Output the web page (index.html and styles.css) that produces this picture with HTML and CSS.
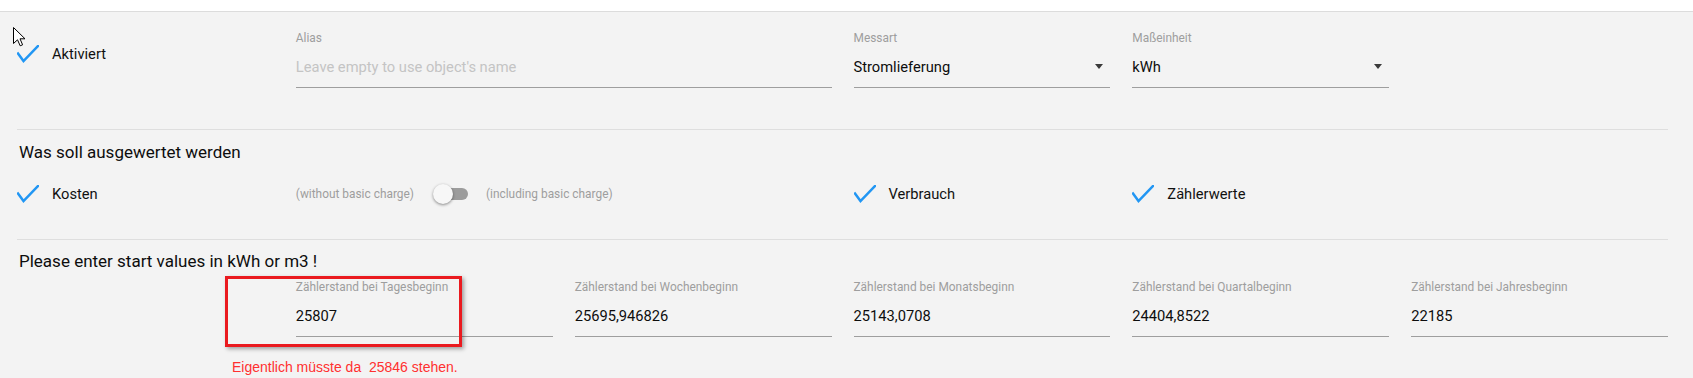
FILE: index.html
```html
<!DOCTYPE html>
<html lang="de">
<head>
<meta charset="utf-8">
<title>Einstellungen</title>
<link rel="stylesheet" href="styles.css">
</head>
<body>
<div class="topbar"></div>
<main class="page">
  <section class="sec sec1 grid">
    <div class="check-item check-top">
      <svg class="tick" viewBox="0 0 22 18" width="22" height="18"><polyline points="1,8.5 6.5,16 21,1" /></svg>
      <span>Aktiviert</span>
    </div>
    <div class="field span2">
      <div class="field-label">Alias</div>
      <div class="field-input placeholder">Leave empty to use object's name</div>
    </div>
    <div class="field">
      <div class="field-label">Messart</div>
      <div class="field-input select"><span>Stromlieferung</span><i class="caret"></i></div>
    </div>
    <div class="field">
      <div class="field-label">Maßeinheit</div>
      <div class="field-input select"><span>kWh</span><i class="caret"></i></div>
    </div>
  </section>

  <section class="sec sec2">
    <h3 class="heading">Was soll ausgewertet werden</h3>
    <div class="grid">
      <div class="check-item">
        <svg class="tick" viewBox="0 0 22 18" width="22" height="18"><polyline points="1,8.5 6.5,16 21,1" /></svg>
        <span>Kosten</span>
      </div>
      <div class="switch span2">
        <span class="switch-text">(without basic charge)</span>
        <span class="lever"><span class="knob"></span></span>
        <span class="switch-text">(including basic charge)</span>
      </div>
      <div class="check-item">
        <svg class="tick" viewBox="0 0 22 18" width="22" height="18"><polyline points="1,8.5 6.5,16 21,1" /></svg>
        <span>Verbrauch</span>
      </div>
      <div class="check-item">
        <svg class="tick" viewBox="0 0 22 18" width="22" height="18"><polyline points="1,8.5 6.5,16 21,1" /></svg>
        <span>Zählerwerte</span>
      </div>
    </div>
  </section>

  <section class="sec sec3">
    <h3 class="heading">Please enter start values in kWh or m3 !</h3>
    <div class="grid fields-row">
      <div class="field col2">
        <div class="highlight"></div>
        <div class="field-label">Zählerstand bei Tagesbeginn</div>
        <div class="field-input">25807</div>
      </div>
      <div class="field">
        <div class="field-label">Zählerstand bei Wochenbeginn</div>
        <div class="field-input">25695,946826</div>
      </div>
      <div class="field">
        <div class="field-label">Zählerstand bei Monatsbeginn</div>
        <div class="field-input">25143,0708</div>
      </div>
      <div class="field">
        <div class="field-label">Zählerstand bei Quartalbeginn</div>
        <div class="field-input">24404,8522</div>
      </div>
      <div class="field">
        <div class="field-label">Zählerstand bei Jahresbeginn</div>
        <div class="field-input">22185</div>
      </div>
    </div>
    <p class="note">Eigentlich müsste da&nbsp; 25846 stehen.</p>
  </section>
</main>
<svg class="cursor" viewBox="0 0 13 20" width="13" height="20"><path d="M0.5 0.5 L0.5 16.5 L4.5 12.8 L7.2 18.8 L9.6 17.8 L7 11.8 L12 11.8 Z" /></svg>
</body>
</html>
```

FILE: styles.css
```css
* { box-sizing: border-box; }

html, body {
  margin: 0;
  padding: 0;
  height: 100%;
  overflow: hidden;
}

body {
  background: #f3f3f3;
  font-family: Roboto, "Noto Sans", Arial, sans-serif;
  color: #111111;
  position: relative;
}

.topbar {
  height: 12px;
  background: #ffffff;
  border-bottom: 1px solid #dcdcdc;
}

.page {
  padding: 0 25px 0 17px;
}

.grid {
  display: grid;
  grid-template-columns: repeat(6, 1fr);
  column-gap: 22px;
}

.span2 { grid-column: span 2; }
.col2 { grid-column-start: 2; }

.sec {
  border-bottom: 1px solid #dedede;
}

.sec1 {
  padding: 19px 0 41px;
  align-items: start;
}

.sec2 {
  padding: 11px 0 35px;
}

.sec3 {
  padding: 10px 0 0;
  border-bottom: none;
}

.heading {
  margin: 0 0 21px 2px;
  font-size: 17px;
  font-weight: 400;
  line-height: 22px;
  color: #0d0d0d;
}

.sec3 .heading { margin-bottom: 8px; }

.check-item {
  display: flex;
  align-items: center;
  gap: 13px;
  height: 20px;
  font-size: 14.7px;
  line-height: 20px;
}

.check-top { margin-top: 13px; }

.tick {
  flex: none;
  display: block;
}

.tick polyline {
  fill: none;
  stroke: #2196f3;
  stroke-width: 2.5;
  stroke-linecap: square;
  stroke-linejoin: miter;
}

.field {
  position: relative;
  min-width: 0;
}

.field-label {
  font-size: 11.9px;
  line-height: 14px;
  color: #9e9e9e;
  white-space: nowrap;
}

.field-input {
  margin-top: 12px;
  height: 31px;
  padding-bottom: 10px;
  font-size: 14.7px;
  line-height: 20px;
  color: #0d0d0d;
  border-bottom: 1px solid #9e9e9e;
  white-space: nowrap;
}

.placeholder { color: #c4c4c4; }

.select {
  display: flex;
  align-items: flex-start;
  justify-content: space-between;
}

.caret {
  width: 0;
  height: 0;
  margin: 7px 7px 0 0;
  border-left: 4.5px solid transparent;
  border-right: 4.5px solid transparent;
  border-top: 5px solid #3a3a3a;
}

.switch {
  display: flex;
  align-items: center;
  height: 18px;
  margin-top: 1px;
}

.switch-text {
  font-size: 11.9px;
  line-height: 14px;
  color: #9e9e9e;
  white-space: nowrap;
}

.lever {
  position: relative;
  width: 34px;
  height: 12px;
  margin: 0 18px 0 20px;
  border-radius: 7px;
  background: #9c9c9c;
}

.knob {
  position: absolute;
  left: -1px;
  top: -4px;
  width: 20px;
  height: 20px;
  border-radius: 50%;
  background: #f7f7f7;
  box-shadow: 0 1px 3px rgba(0, 0, 0, 0.45);
}

.fields-row { align-items: start; }

.highlight {
  position: absolute;
  left: -71px;
  top: -4px;
  width: 237px;
  height: 71px;
  border: 3px solid #ea1a1f;
  box-shadow: 2px 2px 4px rgba(0, 0, 0, 0.35);
  pointer-events: none;
}

.note {
  margin: 22px 0 0 215px;
  font-family: "Liberation Sans", Arial, sans-serif;
  font-size: 14px;
  line-height: 16px;
  color: #ff3030;
}

.cursor {
  position: absolute;
  left: 13px;
  top: 27px;
}

.cursor path {
  fill: #ffffff;
  stroke: #000000;
  stroke-width: 1;
  stroke-linejoin: miter;
}
```
